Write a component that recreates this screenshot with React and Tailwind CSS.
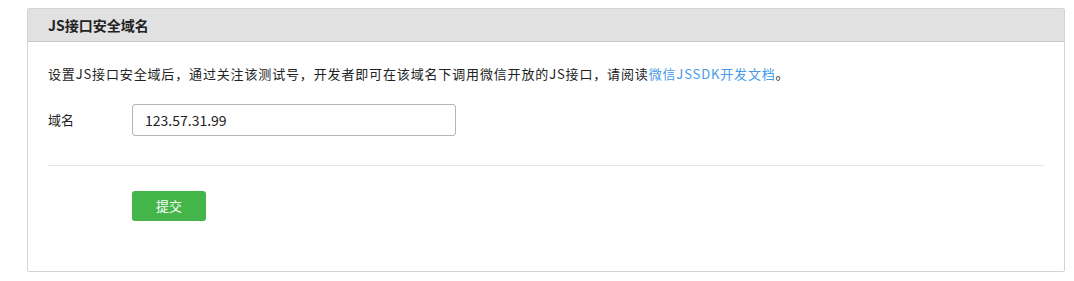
import React from "react";

function App() {
  return (
    <div className="bg-white w-full h-[281px] pt-[8px] pl-[27px] pr-[9px] font-['Microsoft_YaHei','Noto_Sans_CJK_SC',sans-serif] text-[#222]">
      <div className="border border-[#d4d4d4] rounded-[2px] h-[264px] bg-white">
        {/* Header */}
        <div className="h-[33px] bg-[#e1e1e1] border-b border-[#c8c8c8] flex items-center pl-[20px]">
          <h2 className="text-[14px] font-bold text-[#222]">JS接口安全域名</h2>
        </div>

        <div className="px-[20px]">
          <p className="text-[13px] mt-[22px] leading-[20px] tracking-[0.85px]">
            设置JS接口安全域后，通过关注该测试号，开发者即可在该域名下调用微信开放的JS接口，请阅读
            <a className="text-[#459ae9]">微信JSSDK开发文档</a>。
          </p>

          <div className="flex items-center mt-[20px]">
            <label className="w-[84px] text-[13px]">域名</label>
            <input
              className="w-[324px] h-[32px] border border-[#b5b5b5] rounded-[3px] px-[12px] text-[14px] text-[#222] outline-none"
              defaultValue="123.57.31.99"
            />
          </div>

          <div className="border-t border-[#e5e5e5] mt-[29px]" />

          <div className="pl-[84px] mt-[25px]">
            <button className="w-[74px] h-[30px] bg-[#44b549] text-white text-[13px] rounded-[3px]">
              提交
            </button>
          </div>
        </div>
      </div>
    </div>
  );
}

export default App;
